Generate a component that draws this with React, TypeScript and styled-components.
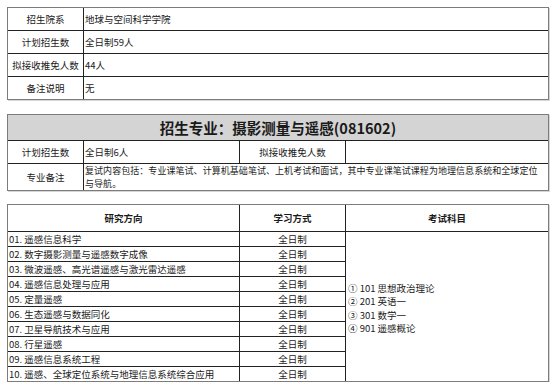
import React from "react";
import styled, { createGlobalStyle } from "styled-components";

const GlobalStyle = createGlobalStyle`
  html, body { margin: 0; padding: 0; background: #ffffff; }
  body {
    font-family: "Noto Sans CJK SC", "Noto Sans", sans-serif;
    color: #1a1a1a;
  }
`;

const Page = styled.div`
  display: flex;
  flex-direction: column;
  padding: 7px 0 0 7px;
  width: 542px;
`;

const Grid = styled.div<{ $cols: string; $rows: string; $mt?: number }>`
  display: grid;
  grid-template-columns: ${(p) => p.$cols};
  grid-template-rows: ${(p) => p.$rows};
  gap: 1px;
  background: #222222;
  border: 1px solid #7c7c7c;
  box-shadow: 1px 1px 0 #d6d6d6;
  margin-top: ${(p) => p.$mt ?? 0}px;
`;

const Cell = styled.div<{
  $align?: "left" | "center";
  $bold?: boolean;
  $span?: number;
  $gray?: boolean;
}>`
  background: ${(p) => (p.$gray ? "#d4d4d4" : "#ffffff")};
  display: flex;
  align-items: center;
  justify-content: ${(p) => (p.$align === "center" ? "center" : "flex-start")};
  padding: 0 1px;
  font-size: 9.5px;
  line-height: 12px;
  font-weight: ${(p) => (p.$bold ? 700 : 400)};
  white-space: nowrap;
  overflow: hidden;
  ${(p) => (p.$span ? `grid-column: span ${p.$span};` : "")}
`;

const TitleCell = styled(Cell)`
  font-size: 14.5px;
  font-weight: 700;
`;

const NoteCell = styled(Cell)`
  flex-direction: column;
  align-items: flex-start;
  justify-content: center;
  font-size: 9px;
  letter-spacing: 0.05px;
  line-height: 13px;
`;

const SubjectsCell = styled.div`
  grid-column: 3;
  grid-row: 2 / span 10;
  background: #ffffff;
  display: flex;
  flex-direction: column;
  justify-content: center;
  padding: 4px 0 0 2px;
  font-size: 9.5px;
  line-height: 13.5px;
  white-space: nowrap;
`;

const directions = [
  "01. 遥感信息科学",
  "02. 数字摄影测量与遥感数字成像",
  "03. 微波遥感、高光谱遥感与激光雷达遥感",
  "04. 遥感信息处理与应用",
  "05. 定量遥感",
  "06. 生态遥感与数据同化",
  "07. 卫星导航技术与应用",
  "08. 行星遥感",
  "09. 遥感信息系统工程",
  "10. 遥感、全球定位系统与地理信息系统综合应用",
];

const subjects = [
  "① 101 思想政治理论",
  "② 201 英语一",
  "③ 301 数学一",
  "④ 901 遥感概论",
];

export default function App() {
  return (
    <>
      <GlobalStyle />
      <Page>
        <Grid $cols="75px 1fr" $rows="repeat(4, 22px)">
          <Cell $align="center">招生院系</Cell>
          <Cell>地球与空间科学学院</Cell>
          <Cell $align="center">计划招生数</Cell>
          <Cell>全日制59人</Cell>
          <Cell $align="center">拟接收推免人数</Cell>
          <Cell>44人</Cell>
          <Cell $align="center">备注说明</Cell>
          <Cell>无</Cell>
        </Grid>

        <Grid $cols="75px 155px 105px 1fr" $rows="25px 22px 26px" $mt={14}>
          <TitleCell $align="center" $span={4} $gray>
            招生专业：摄影测量与遥感(081602)
          </TitleCell>
          <Cell $align="center">计划招生数</Cell>
          <Cell>全日制6人</Cell>
          <Cell $align="center">拟接收推免人数</Cell>
          <Cell />
          <Cell $align="center">专业备注</Cell>
          <NoteCell $span={3}>
            <span>复试内容包括：专业课笔试、计算机基础笔试、上机考试和面试，其中专业课笔试课程为地理信息系统和全球定位</span>
            <span>与导航。</span>
          </NoteCell>
        </Grid>

        <Grid $cols="231px 105px 1fr" $rows="26px repeat(10, 14px)" $mt={13}>
          <Cell $align="center" $bold>研究方向</Cell>
          <Cell $align="center" $bold>学习方式</Cell>
          <Cell $align="center" $bold>考试科目</Cell>
          <SubjectsCell>
            {subjects.map((s) => (
              <span key={s}>{s}</span>
            ))}
          </SubjectsCell>
          {directions.map((d) => (
            <React.Fragment key={d}>
              <Cell style={{ gridColumn: 1 }}>{d}</Cell>
              <Cell $align="center" style={{ gridColumn: 2 }}>全日制</Cell>
            </React.Fragment>
          ))}
        </Grid>
      </Page>
    </>
  );
}
